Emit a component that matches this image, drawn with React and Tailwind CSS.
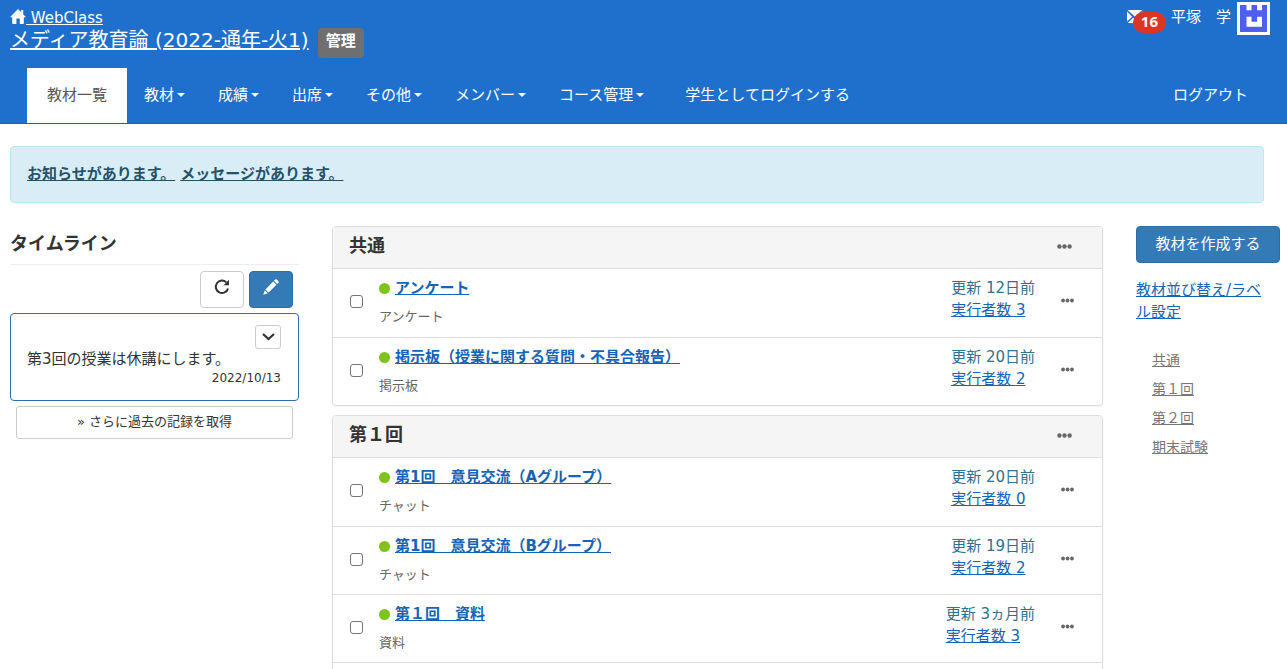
import React from "react";

function HomeIcon() {
  return (
    <svg width="16" height="15" viewBox="0 0 16 15" fill="white" className="mb-[3px]" aria-hidden="true">
      <path d="M8 0 L16 8.2 H13.8 V14.2 Q13.8 15 13 15 H9.8 V9.6 H6.4 V15 H3 Q2.2 15 2.2 14.2 V8.2 H0 Z" />
      <path d="M11.2 1 H13.2 V5 H11.2 Z" />
    </svg>
  );
}

function MailIcon() {
  return (
    <svg width="16" height="14" viewBox="0 0 16 14" fill="white" aria-hidden="true">
      <path d="M0.6 0 H15.4 L8 6.8 Z" />
      <path d="M0 1.6 L5.2 6.8 L0 11.4 Z" />
      <path d="M16 1.6 L10.8 6.8 L16 11.4 Z" />
      <path d="M0.8 13 L6 7.8 L8 9.4 L10 7.8 L15.2 13 Z" />
    </svg>
  );
}

function RepeatIcon() {
  return (
    <svg width="16" height="16" viewBox="0 0 16 16" aria-hidden="true">
      <path d="M12.4 3.4 A6.2 6.2 0 1 0 14 9.4" fill="none" stroke="#333" strokeWidth="2" />
      <path d="M15 0.8 V6.2 H9.6 Z" fill="#333" />
    </svg>
  );
}

function PencilIcon() {
  return (
    <svg width="16" height="16" viewBox="0 0 16 16" fill="white" aria-hidden="true">
      <path d="M12.2 0.6 Q13 -0.2 13.8 0.6 L15.4 2.2 Q16.2 3 15.4 3.8 L14.2 5 L11 1.8 Z" />
      <path d="M10.2 2.6 L13.4 5.8 L5.6 13.6 L2.4 10.4 Z" />
      <path d="M1.8 11.2 L4.8 14.2 L0.2 15.8 Z" />
    </svg>
  );
}

function ChevronIcon() {
  return (
    <svg width="13" height="8" viewBox="0 0 13 8" aria-hidden="true">
      <path d="M1 1 L6.5 6 L12 1" fill="none" stroke="#333" strokeWidth="2.2" />
    </svg>
  );
}

function Dots({ label, small }) {
  return (
    <button type="button" aria-label={label} className="flex items-center">
      <svg width={small ? 13 : 15} height="5" viewBox="0 0 15 5" fill="#666" aria-hidden="true">
        <circle cx="2.4" cy="2.5" r="2.2" />
        <circle cx="7.5" cy="2.5" r="2.2" />
        <circle cx="12.6" cy="2.5" r="2.2" />
      </svg>
    </button>
  );
}

function Avatar() {
  return (
    <svg width="33" height="33" viewBox="0 0 33 33" role="img" aria-label="平塚 学">
      <rect width="33" height="33" fill="white" />
      <rect x="3" y="3" width="27" height="27" fill="#4e5fee" />
      <path d="M9.5 3 H14.5 V8.2 H9.5 Z M20 3 H25 V8.2 H20 Z" fill="white" />
      <path d="M9.5 14.7 H14.5 V19.7 H20 V14.7 H25 V24.7 H9.5 Z" fill="white" />
    </svg>
  );
}

function Caret() {
  return (
    <svg width="8" height="4" viewBox="0 0 8 4" fill="white" className="ml-[3px]" aria-hidden="true">
      <path d="M0 0 H8 L4 4 Z" />
    </svg>
  );
}

const menus = ["教材", "成績", "出席", "その他", "メンバー", "コース管理"];

const sections = [
  {
    title: "共通",
    items: [
      { name: "アンケート", kind: "アンケート", updated: "12日前", count: 3 },
      { name: "掲示板（授業に関する質問・不具合報告）", kind: "掲示板", updated: "20日前", count: 2 },
    ],
  },
  {
    title: "第１回",
    more: true,
    items: [
      { name: "第1回　意見交流（Aグループ）", kind: "チャット", updated: "20日前", count: 0 },
      { name: "第1回　意見交流（Bグループ）", kind: "チャット", updated: "19日前", count: 2 },
      { name: "第１回　資料", kind: "資料", updated: "3ヵ月前", count: 3 },
    ],
  },
];

function Header() {
  return (
    <header className="border-b border-[#1b62b5] bg-[#1f70cc] text-white">
      <div className="flex h-[68px] items-start justify-between pl-2.5 pr-[17px]">
        <div className="pt-[7px]">
          <a href="#home" className="flex h-[21px] items-center underline">
            <HomeIcon />
            <span className="whitespace-pre"> WebClass</span>
          </a>
          <div className="flex items-start">
            <h1 className="text-[20px] leading-6">
              <a href="#course" className="underline">メディア教育論 (2022-通年-火1)</a>
            </h1>
            <span className="ml-[9px] h-[30px] rounded-[4px] bg-[#6f6f6f] px-2 pt-0.5 font-bold">管理</span>
          </div>
        </div>
        <div className="flex items-start pt-0.5">
          <a href="#messages" className="flex items-start pt-2">
            <MailIcon />
            <span className="-ml-2.5 mt-0.5 h-[21px] rounded-full bg-[#dc3526] px-2 font-['Open_Sans','Noto_Sans_CJK_JP',sans-serif] text-[15px] font-bold leading-[19px]">16</span>
          </a>
          <span className="ml-[5px] pt-1">平塚　学</span>
          <span className="ml-1.5"><Avatar /></span>
        </div>
      </div>
      <nav className="flex h-[55px] gap-px pl-[27px] pr-[39px]">
        <a href="#list" className="flex items-center bg-white px-5 pb-0.5 text-[#555]">教材一覧</a>
        {menus.map((m) => (
          <button key={m} type="button" className="flex items-center px-4 pb-0.5">
            {m}
            <Caret />
          </button>
        ))}
        <a href="#student" className="ml-2 flex items-center px-4 pb-0.5">学生としてログインする</a>
        <a href="#logout" className="ml-auto flex items-center pb-0.5">ログアウト</a>
      </nav>
    </header>
  );
}

function Timeline() {
  return (
    <aside className="w-[289px] shrink-0">
      <h2 className="h-[39px] border-b border-[#eee] pt-[7px] text-[18px] font-bold leading-[22px]">タイムライン</h2>
      <div className="mt-1.5 flex justify-end gap-[5px] pr-1.5">
        <button type="button" aria-label="更新" className="flex h-[37px] w-11 justify-center rounded-[4px] border border-[#ccc] pt-[7px]">
          <RepeatIcon />
        </button>
        <button type="button" aria-label="投稿" className="flex h-[37px] w-11 justify-center rounded-[4px] border border-[#2e6da4] bg-[#337ab7] pt-[7px]">
          <PencilIcon />
        </button>
      </div>
      <article className="mt-[5px] rounded-[4px] border border-[#2e6da4] px-4 pb-3 pt-[11px]">
        <button type="button" aria-label="開く" className="ml-auto mr-px flex h-6 w-[26px] items-center justify-center rounded-[3px] border border-[#ccc]">
          <ChevronIcon />
        </button>
        <p className="leading-5">第3回の授業は休講にします。</p>
        <p className="pr-px text-right text-[12px] leading-[19px]">2022/10/13</p>
      </article>
      <div className="mt-[5px] px-1.5">
        <button type="button" className="h-[33px] w-full rounded-[3px] border border-[#ccc] pb-0.5 text-[13px] leading-none">» さらに過去の記録を取得</button>
      </div>
    </aside>
  );
}

function Row({ item }) {
  return (
    <li className="flex h-[68px] border-t border-[#ddd] pl-[17px] pr-7 first:border-t-0">
      <input
        type="checkbox"
        aria-label={item.name}
        className="mt-[26px] h-[13px] w-[13px] shrink-0 appearance-none rounded-[3px] border border-[#767676] bg-white checked:bg-[#337ab7]"
      />
      <div className="ml-4 min-w-0 flex-1 pt-2">
        <div className="flex items-center">
          <span className="h-[11px] w-[11px] rounded-full bg-[#7fc31c]" />
          <a href="#item" className="ml-[5px] font-bold text-[#1763b5] underline">{item.name}</a>
        </div>
        <p className="mt-[7px] text-[13px] text-[#666]">{item.kind}</p>
      </div>
      <div className="pt-2 text-[#31708f]">
        <div>更新 {item.updated}</div>
        <a href="#users" className="text-[#1763b5] underline">実行者数 {item.count}</a>
      </div>
      <div className="ml-[26px] flex h-[62px] items-center">
        <Dots small label="教材メニュー" />
      </div>
    </li>
  );
}

function Section({ section }) {
  return (
    <section className="rounded-[4px] border border-[#ddd] shadow-xs">
      <div className="flex h-[42px] items-center justify-between rounded-t-[3px] border-b border-[#ddd] bg-[#f5f5f5] pb-[3px] pl-4 pr-[30px]">
        <h2 className="text-[18px] font-bold">{section.title}</h2>
        <Dots label="セクションメニュー" />
      </div>
      <ul>
        {section.items.map((item) => (
          <Row key={item.name} item={item} />
        ))}
        {section.more && <li className="h-[68px] border-t border-[#ddd]" />}
      </ul>
    </section>
  );
}

function Sidebar() {
  return (
    <aside className="w-36 shrink-0">
      <button type="button" className="h-[37px] w-full rounded-[4px] border border-[#2e6da4] bg-[#337ab7] pb-0.5 text-white">教材を作成する</button>
      <a href="#sort" className="mt-4 block pr-3 text-[#1763b5] underline">教材並び替え/ラベル設定</a>
      <ul className="mt-[26px] flex flex-col gap-[7px] pl-4 text-[14px] text-[#767676]">
        {["共通", "第１回", "第２回", "期末試験"].map((t) => (
          <li key={t}><a href="#section" className="underline">{t}</a></li>
        ))}
      </ul>
    </aside>
  );
}

export default function App() {
  return (
    <div className="h-screen overflow-hidden bg-white font-['DejaVu_Sans','Noto_Sans_CJK_JP',sans-serif] text-[15px] leading-[22px] text-[#333]">
      <Header />
      <div className="ml-2.5 mr-[23px] mt-[22px] rounded-[4px] border border-[#bce8f1] bg-[#d9edf7] px-4 py-4 font-bold text-[#245269]">
        <div className="flex min-h-[23px] gap-[5px]">
          <a href="#news" className="underline">お知らせがあります。</a>
          <a href="#messages" className="underline">メッセージがあります。</a>
        </div>
      </div>
      <main className="flex gap-[33px] pb-6 pl-2.5 pr-[7px] pt-[23px]">
        <Timeline />
        <div className="flex min-w-0 flex-1 flex-col gap-[9px]">
          {sections.map((s) => (
            <Section key={s.title} section={s} />
          ))}
        </div>
        <Sidebar />
      </main>
    </div>
  );
}
